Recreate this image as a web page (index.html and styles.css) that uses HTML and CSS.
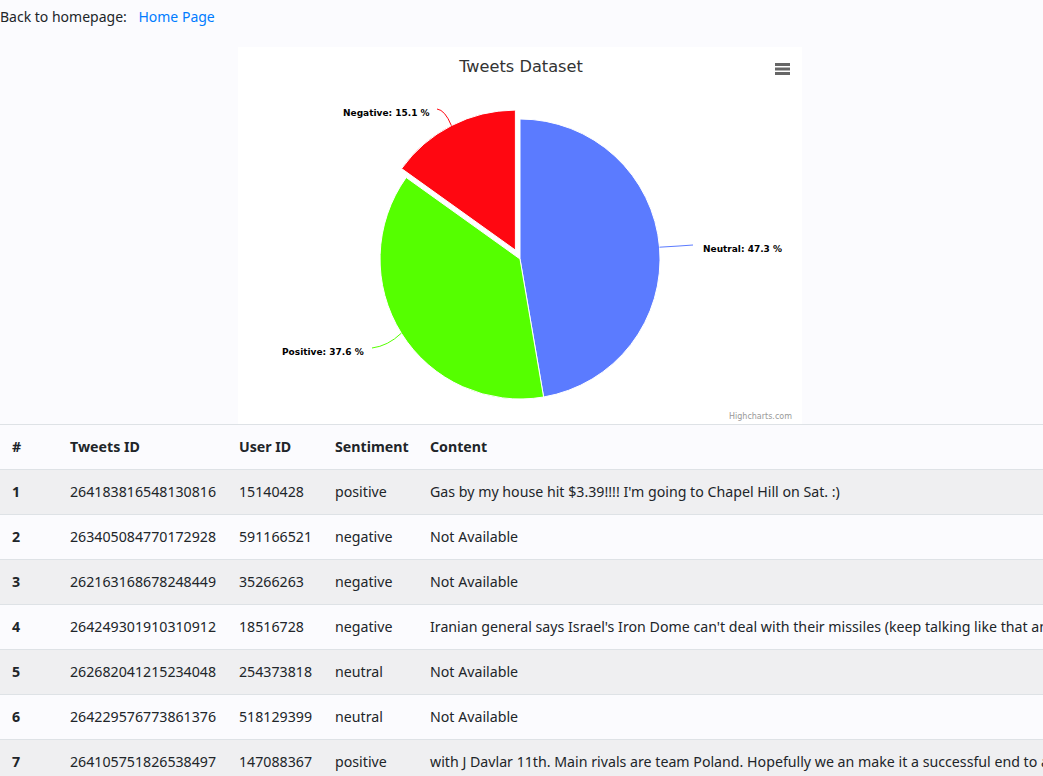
FILE: index.html
```html
<!DOCTYPE html>
<html lang="en">
<head>
<meta charset="utf-8">
<title>Tweets Dataset</title>
<link rel="stylesheet" href="styles.css">
</head>
<body>
<div class="page">
  <div class="topbar">Back to homepage: <a class="home-link" href="#">Home Page</a></div>

  <div class="chart">
    <svg class="chart-svg" width="564" height="377" viewBox="0 0 564 377" xmlns="http://www.w3.org/2000/svg">
      <rect x="0" y="0" width="564" height="377" fill="#ffffff"/>
      <text class="chart-title" x="283" y="25" text-anchor="middle">Tweets Dataset</text>
      <g class="menu-icon" stroke="#666666" stroke-width="3" stroke-linecap="butt">
        <line x1="537" y1="17.5" x2="552" y2="17.5"/>
        <line x1="537" y1="22" x2="552" y2="22"/>
        <line x1="537" y1="26.5" x2="552" y2="26.5"/>
      </g>
      <g stroke="#ffffff" stroke-width="1" stroke-linejoin="round">
        <path d="M282,212 L282,72 A140,140 0 0 1 305.6,350 Z" fill="#5b7bff"/>
        <path d="M282,212 L305.6,350 A140,140 0 0 1 168.2,130.5 Z" fill="#55ff00"/>
        <path d="M277.4,203.1 L163.6,121.6 A140,140 0 0 1 277.4,63.1 Z" fill="#ff0711"/>
      </g>
      <g fill="none" stroke-width="1">
        <path d="M421.5,200.2 L441,199 L455,198" stroke="#5b7bff"/>
        <path d="M199,62 Q207,63 213.4,78.6" stroke="#ff0711"/>
        <path d="M134,301 Q150,299 163.3,286.2" stroke="#55ff00"/>
      </g>
      <g class="data-label">
        <text x="465" y="205">Neutral: 47.3 %</text>
        <text x="105" y="69">Negative: 15.1 %</text>
        <text x="44" y="308">Positive: 37.6 %</text>
      </g>
      <text class="credit" x="554" y="372" text-anchor="end">Highcharts.com</text>
    </svg>
  </div>

  <div class="table-wrap">
    <table class="data-table">
      <thead>
        <tr>
          <th class="c-num">#</th>
          <th class="c-tid">Tweets ID</th>
          <th class="c-uid">User ID</th>
          <th class="c-sent">Sentiment</th>
          <th class="c-content">Content</th>
        </tr>
      </thead>
      <tbody>
        <tr><th>1</th><td>264183816548130816</td><td>15140428</td><td>positive</td><td>Gas by my house hit $3.39!!!! I'm going to Chapel Hill on Sat. :)</td></tr>
        <tr><th>2</th><td>263405084770172928</td><td>591166521</td><td>negative</td><td>Not Available</td></tr>
        <tr><th>3</th><td>262163168678248449</td><td>35266263</td><td>negative</td><td>Not Available</td></tr>
        <tr><th>4</th><td>264249301910310912</td><td>18516728</td><td>negative</td><td>Iranian general says Israel's Iron Dome can't deal with their missiles (keep talking like that and we may end up finding out)</td></tr>
        <tr><th>5</th><td>262682041215234048</td><td>254373818</td><td>neutral</td><td>Not Available</td></tr>
        <tr><th>6</th><td>264229576773861376</td><td>518129399</td><td>neutral</td><td>Not Available</td></tr>
        <tr><th>7</th><td>264105751826538497</td><td>147088367</td><td>positive</td><td>with J Davlar 11th. Main rivals are team Poland. Hopefully we an make it a successful end to a tough week of training tomorrow.</td></tr>
        <tr><th>8</th><td>264094586689953794</td><td>332474633</td><td>negative</td><td>Not Available</td></tr>
      </tbody>
    </table>
  </div>
</div>
</body>
</html>
```

FILE: styles.css
```css
html, body {
  margin: 0;
  padding: 0;
}

body {
  background: #fbfbfe;
  color: #212529;
  font-family: "Noto Sans", "Open Sans", sans-serif;
  font-size: 14px;
  line-height: 22px;
  overflow: hidden;
}

.page {
  width: 100%;
}

.topbar {
  padding-top: 6px;
  height: 22px;
  margin-bottom: 19px;
  white-space: nowrap;
}

.home-link {
  color: #007bff;
  text-decoration: none;
  margin-left: 8px;
}

.chart {
  width: 564px;
  height: 377px;
  margin: 0 auto 0 238px;
}

.chart-svg {
  display: block;
}

.chart-title {
  font-family: "DejaVu Sans", Verdana, sans-serif;
  font-size: 16.2px;
  fill: #333333;
}

.data-label text {
  font-family: "DejaVu Sans", Verdana, sans-serif;
  font-size: 9px;
  font-weight: bold;
  fill: #000000;
  stroke: #ffffff;
  stroke-width: 2px;
  stroke-linejoin: round;
  paint-order: stroke;
}

.credit {
  font-family: "DejaVu Sans", Verdana, sans-serif;
  font-size: 8px;
  fill: #999999;
}

.table-wrap {
  width: 100%;
  overflow: hidden;
}

.data-table {
  border-collapse: collapse;
  white-space: nowrap;
  table-layout: fixed;
  width: 1700px;
  font-size: 14.2px;
}

.data-table th,
.data-table td {
  box-sizing: border-box;
  text-align: left;
  vertical-align: top;
  padding: 11px 11px 11px 12px;
  height: 45px;
  line-height: 22px;
  border-top: 1px solid #dee2e6;
  overflow: hidden;
}

.data-table th {
  font-weight: 700;
}

.data-table thead th {
  border-bottom: 1px solid #dee2e6;
}

.data-table tbody tr:nth-child(odd) {
  background: #efeff1;
}

.c-num { width: 58px; }
.c-tid { width: 169px; }
.c-uid { width: 96px; }
.c-sent { width: 95px; }
.c-content { width: auto; }
```
